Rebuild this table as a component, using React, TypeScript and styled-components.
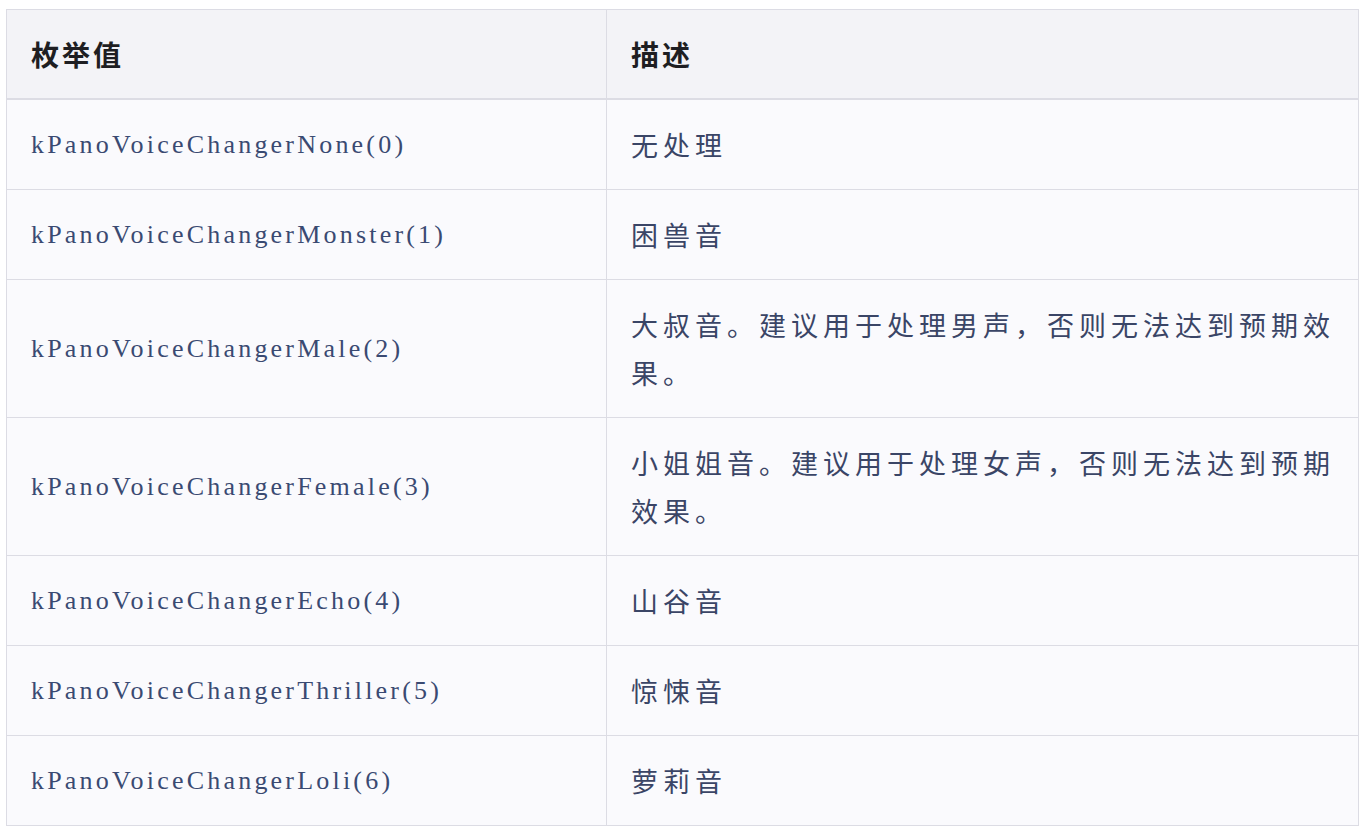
import React from "react";
import styled, { createGlobalStyle } from "styled-components";

const GlobalStyle = createGlobalStyle`
  html, body {
    margin: 0;
    padding: 0;
    background: #ffffff;
  }
`;

const Page = styled.div`
  padding: 9px 12px 0 6px;
`;

const Table = styled.table`
  width: 1353px;
  border-collapse: collapse;
  table-layout: fixed;
  border: 1px solid #dcdce4;
`;

const HeadCell = styled.th`
  background: #f3f3f7;
  border: 1px solid #dcdce4;
  border-bottom: 2px solid #dcdce4;
  padding: 20px 24px 20px;
  text-align: left;
  font-family: "Noto Sans CJK SC", "Noto Sans", sans-serif;
  font-size: 28px;
  font-weight: 700;
  letter-spacing: 3px;
  line-height: 48px;
  color: #1e1e22;
`;

const Row = styled.tr`
  background: #fafafd;
`;

const NameCell = styled.td`
  border: 1px solid #dcdce4;
  padding: 21px 24px 20px;
  font-family: "Liberation Serif", "DejaVu Serif", serif;
  font-size: 26px;
  letter-spacing: 3.2px;
  line-height: 48px;
  color: #3a4a72;
  vertical-align: middle;
`;

const DescCell = styled.td`
  border: 1px solid #dcdce4;
  padding: 21px 8px 20px 24px;
  font-family: "Noto Sans CJK SC", "Noto Sans", sans-serif;
  font-size: 27px;
  letter-spacing: 5px;
  line-height: 48px;
  color: #3a4566;
  vertical-align: middle;
`;

const rows: [string, string][] = [
  ["kPanoVoiceChangerNone(0)", "无处理"],
  ["kPanoVoiceChangerMonster(1)", "困兽音"],
  ["kPanoVoiceChangerMale(2)", "大叔音。建议用于处理男声，否则无法达到预期效果。"],
  ["kPanoVoiceChangerFemale(3)", "小姐姐音。建议用于处理女声，否则无法达到预期效果。"],
  ["kPanoVoiceChangerEcho(4)", "山谷音"],
  ["kPanoVoiceChangerThriller(5)", "惊悚音"],
  ["kPanoVoiceChangerLoli(6)", "萝莉音"],
];

const App: React.FC = () => {
  return (
    <Page>
      <GlobalStyle />
      <Table>
        <colgroup>
          <col style={{ width: "600px" }} />
          <col />
        </colgroup>
        <thead>
          <tr>
            <HeadCell>枚举值</HeadCell>
            <HeadCell>描述</HeadCell>
          </tr>
        </thead>
        <tbody>
          {rows.map(([name, desc]) => (
            <Row key={name}>
              <NameCell>{name}</NameCell>
              <DescCell>{desc}</DescCell>
            </Row>
          ))}
        </tbody>
      </Table>
    </Page>
  );
};

export default App;
